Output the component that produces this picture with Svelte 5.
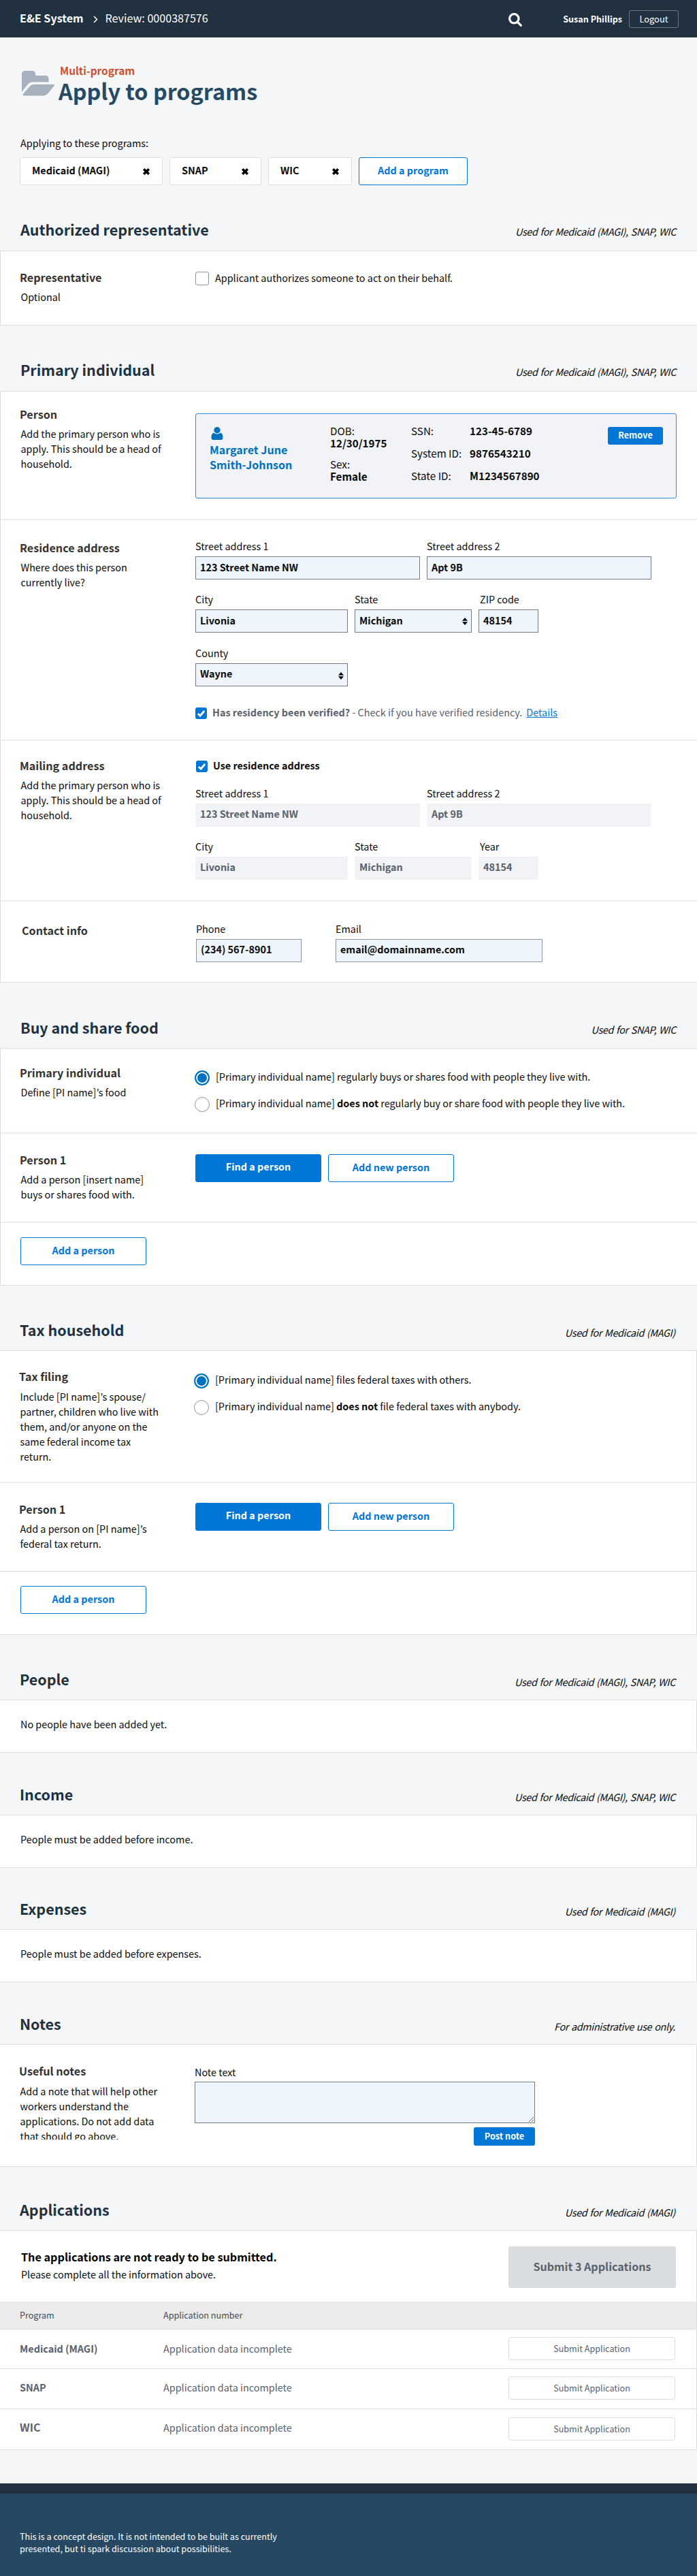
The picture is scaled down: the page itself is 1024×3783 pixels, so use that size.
<script>
  const chips = ['Medicaid (MAGI)', 'SNAP', 'WIC'];
  const rows = ['Medicaid (MAGI)', 'SNAP', 'WIC'];
</script>

{#snippet heading(title, used, cls)}
  <div class="sec-head {cls}">
    <h2>{title}</h2>
    <em>{used}</em>
  </div>
{/snippet}

{#snippet side(title, lines)}
  <div class="side">
    <h3>{title}</h3>
    <p>{#each lines as l}<span>{l}</span>{/each}</p>
  </div>
{/snippet}

{#snippet field(label, value, cls, off)}
  <label class="field {cls}">
    <span>{label}</span>
    <input {value} disabled={off} />
  </label>
{/snippet}

{#snippet select(label, value, cls)}
  <div class="field {cls}">
    <span>{label}</span>
    <div class="select">
      {value}
      <svg width="8" height="11" viewBox="0 0 8 11"><path d="M0 4.7 4 0l4 4.7zM0 6.3h8L4 11z" /></svg>
    </div>
  </div>
{/snippet}

{#snippet check()}
  <span class="check">
    <svg width="17" height="17" viewBox="0 0 17 17"><path d="M3.800 8.900l3.300 3.300L13.200 5" /></svg>
  </span>
{/snippet}

{#snippet personButtons()}
  <div class="main btns">
    <button class="btn solid">Find a person</button>
    <button class="btn">Add new person</button>
  </div>
{/snippet}

<div class="page">
  <header>
    <div class="crumbs">
      <b>E&amp;E System</b>
      <svg width="7" height="12" viewBox="0 0 7 12"><path d="M1 1l4.500 4.500L1 10" /></svg>
      <span>Review: 0000387576</span>
    </div>
    <svg class="search" width="20" height="20" viewBox="0 0 20 20"><circle cx="8.300" cy="8.300" r="6.700" /><path d="M13.500 13.500l4.800 4.800" /></svg>
    <b class="user">Susan Phillips</b>
    <button class="logout">Logout</button>
  </header>

  <div class="intro">
    <div class="titlebar">
      <svg class="folder" width="49" height="37" viewBox="0 0 49 37">
        <path d="M0 31V5Q0 0 5 0h10q5 0 5 5v2h14.500q5 0 5 5v4.500H16q-5 0-8.500 5z" />
        <path d="M2 34 11.500 23q2.500-3 6-3H47q2.200 0 .8 1.800L39 32.500q-3 4-7.500 4H4q-3.500 0-2-2.500z" />
      </svg>
      <div>
        <div class="kicker">Multi-program</div>
        <h1>Apply to programs</h1>
      </div>
    </div>
    <p class="applying">Applying to these programs:</p>
    <div class="chips">
      {#each chips as c}
        <div class="chip {c.slice(0, 4).toLowerCase()}">
          <b>{c}</b>
          <svg width="12" height="12" viewBox="0 0 12 12"><path d="M2.200 2.200l7.600 7.600M9.800 2.200l-7.600 7.600" /></svg>
        </div>
      {/each}
      <button class="btn addprog">Add a program</button>
    </div>
  </div>

  {@render heading('Authorized representative', 'Used for Medicaid (MAGI), SNAP, WIC', 'h96')}
  <section class="panel">
    <div class="row rep">
      {@render side('Representative', ['Optional'])}
      <label class="main option"><span class="box"></span><span>Applicant authorizes someone to act on their behalf.</span></label>
    </div>
  </section>

  {@render heading('Primary individual', 'Used for Medicaid (MAGI), SNAP, WIC', 'h96')}
  <section class="panel">
    <div class="row person">
      {@render side('Person', ['Add the primary person who is', 'apply. This should be a head of', 'household.'])}
      <div class="main card">
        <div class="who">
          <svg width="18" height="19" viewBox="0 0 18 19"><ellipse cx="9" cy="4.700" rx="4.700" ry="4.700" /><path d="M3.800 8.500Q9 12.500 14.200 8.500 17.500 9.800 17.500 15.500 17.500 19 14.500 19h-11Q.5 19 .5 15.500.5 9.800 3.800 8.500z" /></svg>
          <b>Margaret June<br />Smith-Johnson</b>
        </div>
        <div class="dob">
          <div>DOB:<br /><b>12/30/1975</b></div>
          <div>Sex:<br /><b>Female</b></div>
        </div>
        <dl>
          <dt>SSN:</dt><dd>123-45-6789</dd>
          <dt>System ID:</dt><dd>9876543210</dd>
          <dt>State ID:</dt><dd>M1234567890</dd>
        </dl>
        <button class="small">Remove</button>
      </div>
    </div>
    <div class="row residence">
      {@render side('Residence address', ['Where does this person', 'currently live?'])}
      <div class="main">
        <div class="fields">
          {@render field('Street address 1', '123 Street Name NW', 'street', false)}
          {@render field('Street address 2', 'Apt 9B', 'street', false)}
        </div>
        <div class="fields">
          {@render field('City', 'Livonia', 'city', false)}
          {@render select('State', 'Michigan', 'state')}
          {@render field('ZIP code', '48154', 'zip', false)}
        </div>
        <div class="fields county">
          {@render select('County', 'Wayne', 'city')}
        </div>
        <div class="verify">
          {@render check()}
          <span><b>Has residency been verified?</b> - Check if you have verified residency.</span>
          <a href="#details">Details</a>
        </div>
      </div>
    </div>
    <div class="row mailing">
      {@render side('Mailing address', ['Add the primary person who is', 'apply. This should be a head of', 'household.'])}
      <div class="main">
        <div class="verify same">
          {@render check()}
          <b>Use residence address</b>
        </div>
        <div class="fields">
          {@render field('Street address 1', '123 Street Name NW', 'street', true)}
          {@render field('Street address 2', 'Apt 9B', 'street', true)}
        </div>
        <div class="fields">
          {@render field('City', 'Livonia', 'city', true)}
          {@render field('State', 'Michigan', 'state', true)}
          {@render field('Year', '48154', 'zip', true)}
        </div>
      </div>
    </div>
    <div class="row contact">
      {@render side('Contact info', [])}
      <div class="main fields">
        {@render field('Phone', '(234) 567-8901', 'phone', false)}
        {@render field('Email', 'email@domainname.com', 'email', false)}
      </div>
    </div>
  </section>

  {@render heading('Buy and share food', 'Used for SNAP, WIC', 'h96b')}
  <section class="panel">
    <div class="row buy">
      {@render side('Primary individual', ['Define [PI name]’s food'])}
      <div class="main radios">
        <label class="option"><span class="radio on"></span><span>[Primary individual name] regularly buys or shares food with people they live with.</span></label>
        <label class="option"><span class="radio"></span><span>[Primary individual name] <b>does not</b> regularly buy or share food with people they live with.</span></label>
      </div>
    </div>
    <div class="row pick">
      {@render side('Person 1', ['Add a person [insert name]', 'buys or shares food with.'])}
      {@render personButtons()}
    </div>
    <div class="row add"><button class="btn">Add a person</button></div>
  </section>

  {@render heading('Tax household', 'Used for Medicaid (MAGI)', 'h95 late-head')}
  <section class="panel late">
    <div class="row tax">
      {@render side('Tax filing', ['Include [PI name]’s spouse/', 'partner, children who live with', 'them, and/or anyone on the', 'same federal income tax', 'return.'])}
      <div class="main radios">
        <label class="option"><span class="radio on"></span><span>[Primary individual name] files federal taxes with others.</span></label>
        <label class="option"><span class="radio"></span><span>[Primary individual name] <b>does not</b> file federal taxes with anybody.</span></label>
      </div>
    </div>
    <div class="row pick taxpick">
      {@render side('Person 1', ['Add a person on [PI name]’s', 'federal tax return.'])}
      {@render personButtons()}
    </div>
    <div class="row add taxadd"><button class="btn">Add a person</button></div>
  </section>

  {@render heading('People', 'Used for Medicaid (MAGI), SNAP, WIC', 'h95 late-head')}
  <section class="panel late empty">No people have been added yet.</section>

  {@render heading('Income', 'Used for Medicaid (MAGI), SNAP, WIC', 'h91 late-head')}
  <section class="panel late empty">People must be added before income.</section>

  {@render heading('Expenses', 'Used for Medicaid (MAGI)', 'h90 late-head')}
  <section class="panel late empty">People must be added before expenses.</section>

  {@render heading('Notes', 'For administrative use only.', 'h91 late-head notes-head')}
  <section class="panel late">
    <div class="row notes">
      {@render side('Useful notes', ['Add a note that will help other', 'workers understand the', 'applications. Do not add data', 'that should go above.'])}
      <div class="main note">
        <span>Note text</span>
        <textarea></textarea>
        <button class="small">Post note</button>
      </div>
    </div>
  </section>

  {@render heading('Applications', 'Used for Medicaid (MAGI)', 'h93 late-head')}
  <section class="panel late apps">
    <div class="ready">
      <div>
        <b>The applications are not ready to be submitted.</b>
        <p>Please complete all the information above.</p>
      </div>
      <button class="submit-all">Submit 3 Applications</button>
    </div>
    <div class="thead"><span>Program</span><span>Application number</span></div>
    {#each rows as r}
      <div class="trow {r.toLowerCase().slice(0, 4)}">
        <b>{r}</b>
        <span>Application data incomplete</span>
        <button>Submit Application</button>
      </div>
    {/each}
  </section>

  <footer>
    <p>This is a concept design. It is not intended to be built as currently<br />presented, but ti spark discussion about possibilities.</p>
  </footer>
</div>

<style>
  :global(body) { margin: 0; background: #f5f6f8; }
  .page {
    width: 1024px;
    overflow: hidden;
    font-family: 'Noto Sans CJK KR', 'Noto Sans CJK SC', 'Open Sans', sans-serif;
    font-size: 14.4px;
    line-height: 22px;
    color: #0a0a0a;
  }
  .page :global(*) { box-sizing: border-box; }
  h1, h2, h3, p, dl, dd { margin: 0; }
  button, input, textarea { font-family: inherit; margin: 0; padding: 0; }
  span, b, em { white-space: nowrap; }

  header {
    height: 55px;
    background: #21313f;
    color: #fff;
    display: flex;
    align-items: flex-start;
    padding: 0 27px 0 29px;
  }
  .crumbs { display: flex; font-size: 16.100px; line-height: 22px; padding-top: 15px; width: 718px; }
  .crumbs svg { margin: 8px 11px 0 14px; fill: none; stroke: #fff; stroke-width: 1.500; }
  .search { margin-top: 19px; fill: none; stroke: #fff; stroke-width: 3.200; stroke-linecap: round; }
  .user { font-size: 12.600px; line-height: 20px; margin: 18px 10px 0 auto; }
  .logout {
    width: 73px; height: 26px; margin-top: 15px;
    border: 1px solid #6b7681; border-radius: 3px;
    background: none; color: #fff; font-size: 12.900px; line-height: 24px;
  }

  .intro { height: 217px; padding: 37px 29px 0; }
  .titlebar { display: flex; height: 96px; }
  .folder { margin: 12px 5px 0 3px; fill: #a5b1bd; }
  .kicker { color: #cd4f2c; font-size: 15.400px; font-weight: bold; line-height: 22px; padding-left: 2px; }
  h1 { color: #264a64; font-size: 32.300px; line-height: 42px; margin-top: -2px; }
  .applying { padding: 11px 0 0 1px; height: 43px; }
  .chips { display: flex; gap: 10px; }
  .chip {
    height: 41px; background: #fff; border: 1px solid #dcdee0; border-radius: 3px;
    display: flex; align-items: center; justify-content: space-between; padding: 0 17px;
  }
  .chip.medi { width: 210px; }
  .chip.snap { width: 135px; }
  .chip.wic { width: 123px; }
  .chip b { padding-bottom: 3px; }
  .chip svg { stroke: #000; stroke-width: 3.600; }

  .sec-head { display: flex; justify-content: space-between; align-items: flex-end; padding: 0 30px 15px 30px; }
  .h96, .h96b { height: 96px; }
  .h96 { padding-bottom: 16px; }
  .h95 { height: 95px; }
  .h93 { height: 93px; }
  .h91 { height: 91px; }
  .h90 { height: 90px; }
  .late-head { padding-left: 29px; padding-right: 31px; }
  h2 { font-size: 21.500px; line-height: 30px; color: #21313f; }
  em { line-height: 24px; letter-spacing: -0.35px; word-spacing: 1.100px; padding-right: 1px; }
  .late-head em { margin-bottom: -1px; }

  .panel { background: #fff; border: 1px solid #dcdee0; border-right: 0; }
  .late { border-left: 0; border-right: 1px solid #dcdee0; }
  .row {
    display: grid;
    grid-template-columns: 257px 1fr;
    align-items: start;
    padding-left: 29px;
    border-bottom: 2px solid #eee;
  }
  .row:last-child { border-bottom: 0; }
  .side h3 { font-size: 16.150px; line-height: 22px; color: #333; margin-left: -1px; }
  .side p { padding-top: 7px; margin-left: 0.5px; }
  .side span { display: block; }

  .rep { height: 108px; padding-top: 27px; }
  .option { display: flex; line-height: 22px; }
  .option > span:last-child { margin-top: -2px; }
  .rep .option { margin-top: 2px; }
  .rep .option > span:last-child { margin-top: -1px; }
  .box { width: 20px; height: 20px; border: 1px solid #8f9499; border-radius: 3px; margin: 1px 9px 0 0; }

  .person { height: 189px; padding-top: 22px; }
  .card {
    width: 707px; height: 125px; margin-top: 10px;
    background: #f1f3f7; border: 1px solid #2d8bdb; border-radius: 3px;
    display: grid; grid-template-columns: 177px 119px 289px 1fr;
    align-items: start; padding: 15px 0 0 20px; font-size: 15.200px; line-height: 18px;
  }
  .who { padding-top: 4px; color: #0071bc; font-size: 16.100px; line-height: 22px; }
  .who svg { display: block; margin: 0 0 3px 2px; fill: #0071bc; }
  .dob { display: grid; gap: 13px; }
  dl { display: grid; grid-template-columns: 86px 1fr; row-gap: 15px; }
  dt { white-space: nowrap; }
  dd { font-weight: bold; }
  .small {
    background: #0076d6; color: #fff; border: 0; border-radius: 3px; padding-bottom: 2px;
    width: 81px; height: 26px; margin-top: 4px; font-size: 12.700px; font-weight: bold; line-height: 24px;
  }

  .residence { height: 324px; padding-top: 29px; }
  .fields { display: flex; gap: 10px; margin-bottom: 20px; }
  .field > span { display: block; line-height: 18px; margin-bottom: 6px; }
  .field input, .select {
    display: block; width: 100%; height: 34px; background: #eef5fc; border: 1px solid #777c80; border-radius: 0;
    padding: 0 6px 3px; font-size: 14.400px; font-weight: bold; color: #0a0a0a; line-height: 21px;
  }
  .field input:disabled { background: #f1f3f7; border-color: #f1f3f7; color: #5b616b; padding-bottom: 5px; }
  .contact .field input { padding-bottom: 5px; border-color: #8f9499; }
  .select { display: flex; align-items: center; justify-content: space-between; }
  .select svg { margin-top: 4px; margin-right: -1px; }
  .county .select { padding-bottom: 5px; }
  .county .select svg { margin-top: 8px; }
  .street { width: 330px; }
  .city { width: 224px; }
  .state { width: 172px; }
  .zip { width: 88px; }
  .zip > span { padding-left: 2px; }
  .county { margin: 21px 0 29px; }
  .verify { display: flex; line-height: 18px; color: #5b616b; }
  .check { width: 17px; height: 17px; border-radius: 3px; background: #0076d6; margin: 2px 8px 0 0; }
  .check svg { display: block; fill: none; stroke: #fff; stroke-width: 2.800; }
  .verify a { color: #0076d6; margin-left: 6px; }

  .mailing { height: 236px; padding-top: 25px; }
  .same { color: #0a0a0a; padding-left: 1px; margin-bottom: 22px; }
  .mailing .main { margin-top: 2px; }

  .contact { height: 118px; padding-top: 31px; }
  .contact .side { padding: 0 0 0 3px; }
  .contact .main { padding-left: 1px; gap: 50px; }
  .phone { width: 155px; }
  .email { width: 304px; }

  .buy { height: 125px; padding-top: 24px; }
  .radios { display: grid; gap: 17px; margin: 8px 0 0 -1px; }
  .radio { width: 22px; height: 22px; border-radius: 50%; border: 1px solid #8f9499; margin-right: 9px; background: #fff; }
  .radio.on { border: 2px solid #0071bc; box-shadow: inset 0 0 0 2px #fff; background: #0071bc; }

  .pick { height: 131px; padding-top: 27px; }
  .btns { display: flex; gap: 10px; margin-top: 3px; }
  .btn {
    width: 185px; height: 41px; background: #fff; border: 1px solid #0076d6; border-radius: 3px;
    color: #0076d6; font-size: 14.400px; font-weight: bold; line-height: 21px; padding-bottom: 4px;
  }
  .btn.solid { background: #0076d6; color: #fff; padding-bottom: 6px; }
  .addprog { width: 160px; }
  .add { height: 91px; padding-top: 21px; }

  .tax { height: 194px; padding-top: 26px; }
  .tax .side p, .notes .side p { padding-top: 8px; }
  .tax .radios { margin-top: 7px; }
  .taxpick { height: 130px; border-bottom: 1px solid #dcdee0; }
  .late .btns { margin: 2px 0 0 1px; }
  .taxadd { height: 92px; padding-left: 30px; }

  .empty { height: 78px; padding: 24px 0 0 30px; }

  .notes { height: 178px; padding-top: 27px; }
  .notes .side { height: 112px; overflow: hidden; margin-left: -1px; padding-left: 1px; }
  .note { width: 500px; padding-top: 4px; line-height: 18px; }
  .note span { display: block; }
  .note textarea { display: block; width: 500px; height: 61px; background: #eef5fc; border: 1px solid #777c80; margin-top: 5px; }
  .note .small { display: block; width: 90px; height: 27px; margin: 6px 0 0 auto; }

  .apps { height: 323px; }
  .ready { display: flex; justify-content: space-between; height: 104px; padding: 23px 30px 0 31px; }
  .ready b { display: block; font-size: 16.200px; line-height: 24px; padding-top: 3px; color: #000; }
  .ready p { line-height: 24px; margin-top: 2px; }
  .submit-all { width: 246px; height: 61px; border: 0; border-radius: 3px; background: #dadde0; color: #5b616b; font-size: 16.100px; font-weight: bold; padding-bottom: 4px; }
  .thead {
    height: 41px; background: #ebebeb; border-bottom: 1px solid #dcdee0; color: #444b55;
    display: grid; grid-template-columns: 211px 1fr; padding: 9px 0 0 29px; font-size: 12.600px;
  }
  .trow {
    height: 58px; border-bottom: 1px solid #dcdee0; color: #5b616b;
    display: grid; grid-template-columns: 211px 507px 245px; padding: 11px 0 0 29px; line-height: 34px;
  }
  .trow.snap { height: 59px; }
  .trow.snap b, .trow.snap span { margin-top: -1px; }
  .trow.wic { height: 59px; border-bottom: 0; padding-top: 12px; }
  .trow.wic b { font-size: 16px; margin-top: -3px; }
  .trow.wic span { margin-top: -2px; }
  .trow button { height: 34px; background: #fff; border: 1px solid #dcdee0; border-radius: 3px; font-size: 12.600px; color: #5b616b; padding-bottom: 2px; }

  footer { margin-top: 49px; height: 136px; border-top: 15px solid #21313f; background: #264862; color: #fff; padding: 54px 0 0 29px; font-size: 12.600px; line-height: 18px; }
</style>
